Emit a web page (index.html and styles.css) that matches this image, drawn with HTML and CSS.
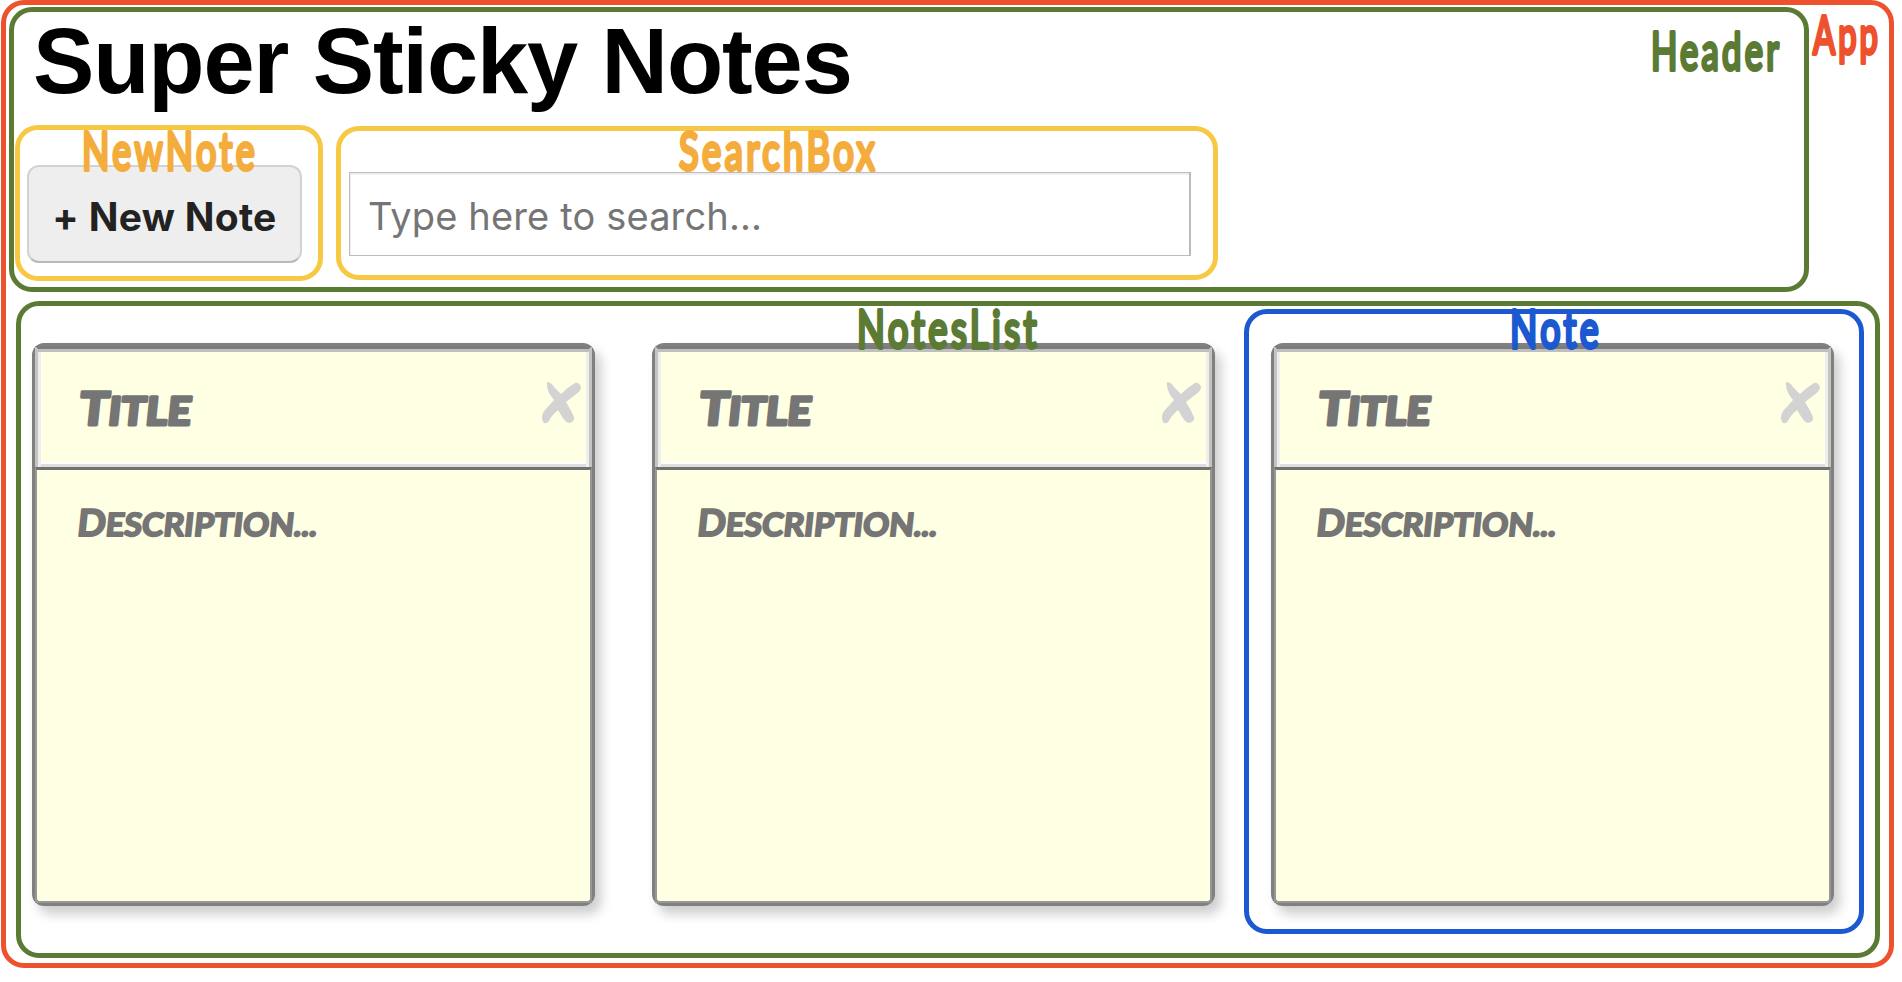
FILE: index.html
```html
<!DOCTYPE html>
<html lang="en">
<head>
<meta charset="utf-8">
<title>Super Sticky Notes</title>
<link rel="stylesheet" href="styles.css">
</head>
<body>
<div class="app">
  <svg class="tag tag-app" width="80" height="60"><text x="7" y="44" textLength="68" lengthAdjust="spacingAndGlyphs">App</text></svg>
  <header class="header">
    <svg class="tag tag-header" width="140" height="60"><text x="4" y="48" textLength="131" lengthAdjust="spacingAndGlyphs">Header</text></svg>
    <h1 class="title">Super Sticky Notes</h1>
    <div class="controls">
      <div class="new-note">
        <svg class="tag tag-new" width="190" height="60"><text x="4" y="48" textLength="176" lengthAdjust="spacingAndGlyphs">NewNote</text></svg>
        <button class="new-button">+ New Note</button>
      </div>
      <div class="search-box">
        <svg class="tag tag-search" width="210" height="60"><text x="4" y="48" textLength="199" lengthAdjust="spacingAndGlyphs">SearchBox</text></svg>
        <input class="search" type="text" placeholder="Type here to search...">
      </div>
    </div>
  </header>
  <main class="notes-list">
    <svg class="tag tag-list" width="190" height="60"><text x="4" y="48" textLength="183" lengthAdjust="spacingAndGlyphs">NotesList</text></svg>
    <div class="slot">
      <article class="note">
        <div class="note-head"><svg class="ink ink-title" width="130" height="50"><text y="41" textLength="112" lengthAdjust="spacingAndGlyphs"><tspan class="cap">T</tspan>ITLE</text></svg><svg class="close" viewBox="0 0 40 42"><path d="M6 0Q10 0 13 5L20 12Q27 5 34 1Q38 0 40 5Q40 9 34 13L25 20Q30 28 33 35Q34 40 28 41Q24 40 22 36L17 28Q10 34 8 39Q5 43 2 40Q-1 33 4 28L13 18Q5 9 6 0Z"/></svg></div>
        <div class="note-body"><svg class="ink ink-desc" width="250" height="50"><text y="38" textLength="240" lengthAdjust="spacingAndGlyphs"><tspan class="cap">D</tspan>ESCRIPTION...</text></svg></div>
      </article>
    </div>
    <div class="slot">
      <article class="note">
        <div class="note-head"><svg class="ink ink-title" width="130" height="50"><text y="41" textLength="112" lengthAdjust="spacingAndGlyphs"><tspan class="cap">T</tspan>ITLE</text></svg><svg class="close" viewBox="0 0 40 42"><path d="M6 0Q10 0 13 5L20 12Q27 5 34 1Q38 0 40 5Q40 9 34 13L25 20Q30 28 33 35Q34 40 28 41Q24 40 22 36L17 28Q10 34 8 39Q5 43 2 40Q-1 33 4 28L13 18Q5 9 6 0Z"/></svg></div>
        <div class="note-body"><svg class="ink ink-desc" width="250" height="50"><text y="38" textLength="240" lengthAdjust="spacingAndGlyphs"><tspan class="cap">D</tspan>ESCRIPTION...</text></svg></div>
      </article>
    </div>
    <div class="slot slot-outlined">
      <svg class="tag tag-note" width="110" height="60"><text x="4" y="48" textLength="92" lengthAdjust="spacingAndGlyphs">Note</text></svg>
      <article class="note">
        <div class="note-head"><svg class="ink ink-title" width="130" height="50"><text y="41" textLength="112" lengthAdjust="spacingAndGlyphs"><tspan class="cap">T</tspan>ITLE</text></svg><svg class="close" viewBox="0 0 40 42"><path d="M6 0Q10 0 13 5L20 12Q27 5 34 1Q38 0 40 5Q40 9 34 13L25 20Q30 28 33 35Q34 40 28 41Q24 40 22 36L17 28Q10 34 8 39Q5 43 2 40Q-1 33 4 28L13 18Q5 9 6 0Z"/></svg></div>
        <div class="note-body"><svg class="ink ink-desc" width="250" height="50"><text y="38" textLength="240" lengthAdjust="spacingAndGlyphs"><tspan class="cap">D</tspan>ESCRIPTION...</text></svg></div>
      </article>
    </div>
  </main>
</div>
</body>
</html>
```

FILE: styles.css
```css
* { box-sizing: border-box; }
body { margin: 0; background: #fff; overflow: hidden; font-family: Inter, "Liberation Sans", sans-serif; }

.app {
  position: relative;
  width: 1893px;
  height: 968px;
  margin-left: 1px;
  padding: 2px 0 0 3px;
  border: 5px solid #ee512d;
  border-radius: 23px;
}
.header {
  position: relative;
  width: 1800px;
  height: 285px;
  padding: 0 1px;
  border: 5px solid #5b7b34;
  border-radius: 23px;
}
.title {
  height: 113px;
  margin: 0;
  padding: 1px 0 0 18px;
  font: bold 92px/96px "Liberation Sans", Arial, sans-serif;
  letter-spacing: -1.1px;
  color: #000;
}
.controls { display: flex; align-items: center; gap: 13px; }
.new-note, .search-box {
  position: relative;
  border: 5px solid #f7c844;
  border-radius: 23px;
}
.new-note { width: 308px; height: 156px; padding: 35px 7px 0; }
.search-box { width: 882px; height: 154px; padding: 41px 8px 0; }
.new-button {
  display: block;
  width: 275px;
  height: 98px;
  padding: 4px 0 0;
  border: 2px solid #d2d2d2;
  border-bottom-color: #b9b9b9;
  border-radius: 12px;
  background: #eee;
  color: #222;
  font: 650 39px/1 Inter, sans-serif;
  letter-spacing: .3px;
  white-space: nowrap;
}
.search {
  display: block;
  width: 842px;
  height: 84px;
  padding: 3px 18px 0;
  border: 1px solid #bbb;
  border-right-width: 2px;
  border-radius: 0;
  background: #fff;
  box-shadow: inset 1px 2px 0 #eee;
  font: 400 38px/1 Inter, sans-serif;
  letter-spacing: .15px;
}
.search::placeholder { color: #757575; opacity: 1; }

/* Handwritten component labels */
.tag {
  position: absolute;
  z-index: 2;
  overflow: visible;
  font: 400 53px Lato, sans-serif;
  letter-spacing: 5px;
  stroke-width: 4px;
  stroke-linejoin: round;
}
.tag-app { right: 3px; top: 5px; fill: #ee512d; stroke: #ee512d; }
.tag-header { right: 17px; top: 10px; fill: #5b7b34; stroke: #5b7b34; }
.tag-new { left: 58px; top: -8px; fill: #f4ad3d; stroke: #f4ad3d; }
.tag-search { left: 334px; top: -9px; fill: #f4ad3d; stroke: #f4ad3d; }
.tag-list { left: 832px; top: -6px; fill: #5b7b34; stroke: #5b7b34; }
.tag-note { left: 257px; top: -14px; fill: #1c59d1; stroke: #1c59d1; }

.notes-list {
  position: relative;
  display: flex;
  width: 1864px;
  height: 657px;
  margin: 9px 0 0 7px;
  padding: 3px 0 0 11px;
  border: 5px solid #5b7b34;
  border-radius: 23px;
}
.slot { flex: none; width: 620px; height: 625px; padding-top: 34px; }
.slot:nth-child(3) { width: 619px; }
.slot-outlined {
  position: relative;
  width: 620px;
  padding: 29px 0 0 22px;
  border: 5px solid #1c59d1;
  border-radius: 23px;
}
.notes-list .slot:nth-child(3) { width: 592px; }
.note {
  display: flex;
  flex-direction: column;
  width: 563px;
  height: 563px;
  border: 3px solid #80807e;
  border-radius: 12px;
  background: #ffffe3;
  box-shadow: 6px 8px 12px rgba(0, 0, 0, .2);
}
.note-head {
  display: flex;
  justify-content: space-between;
  height: 121px;
  padding: 33px 8px 0 37px;
  border: 3px solid #c4c4c3;
  border-top: 3px solid #7c7c7a;
  border-bottom: 0;
  box-shadow: inset 0 3px #bfbfbd, inset 3px 0 #eee, inset -3px 0 #eee, inset 0 -3px #ddd, inset 0 -5px #fff;
}
.note-body {
  flex: 1;
  padding: 28px 0 0 39px;
  border: 2px solid #979797;
  border-top: 3px solid #717171;
}
.ink {
  overflow: visible;
  fill: #757575;
  stroke: #757575;
  stroke-linejoin: round;
  font-family: Lato, sans-serif;
}
.ink text { transform: skewX(-6deg); transform-origin: 0 40px; }
.ink-title { margin-left: 3px; margin-top: 2px; font-size: 39px; font-weight: 900; stroke-width: 3px; }
.ink-title .cap { font-size: 46px; }
.ink-desc { font-size: 32px; font-weight: 700; stroke-width: 2px; }
.ink-desc .cap { font-size: 37px; }
.close { width: 40px; height: 42px; fill: #d3d3d3; }
```
